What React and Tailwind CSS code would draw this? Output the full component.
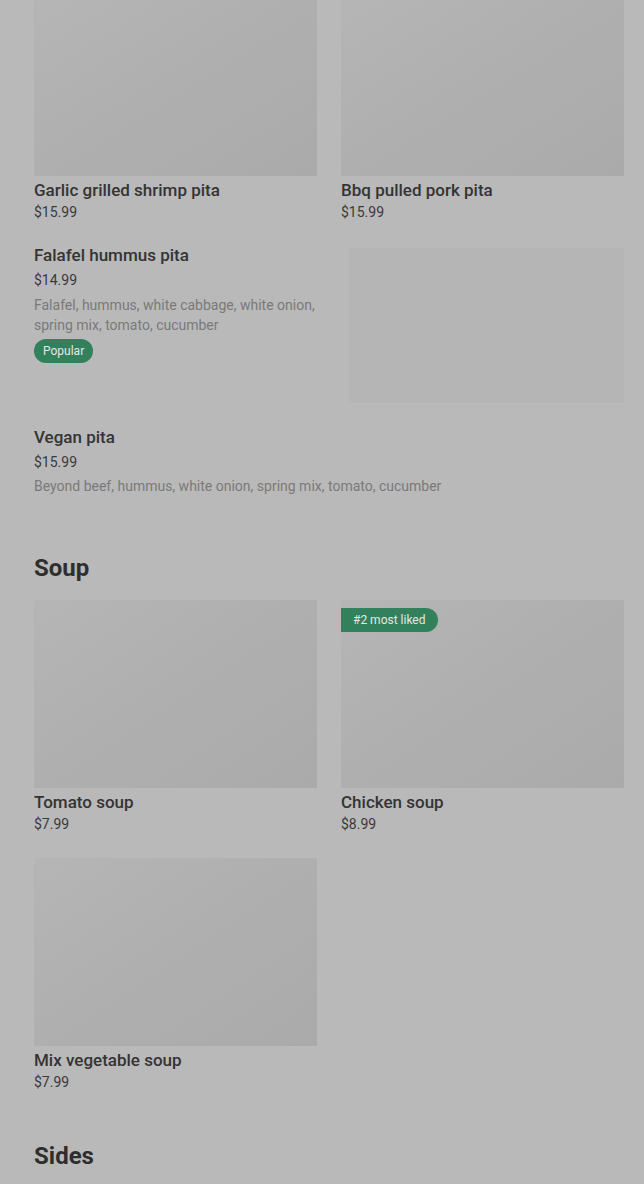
import React from "react";

const Photo = ({ className = "" }) => (
  <div
    className={`bg-gradient-to-br from-[#b5b5b5] via-[#afafaf] to-[#aaaaaa] ${className}`}
  />
);

const GridItem = ({ name, price, tag }) => (
  <div className="flex flex-col">
    <div className="relative">
      <Photo className="h-[188px] w-full" />
      {tag && (
        <span className="absolute left-0 top-2 rounded-r-full bg-[#33805d] pl-3 pr-3 py-1 text-xs leading-4 text-[#e6e6e6]">
          {tag}
        </span>
      )}
    </div>
    <p className="mt-[2px] text-[17px] leading-6 font-medium text-[#343434]">{name}</p>
    <p className="text-sm leading-5 text-[#3a3a3a]">{price}</p>
  </div>
);

export default function App() {
  return (
    <div
      className="min-h-screen bg-[#b9b9b9] pl-[34px] pr-[20px] pb-10"
      style={{ fontFamily: "Roboto, 'Liberation Sans', sans-serif" }}
    >
      <div className="grid grid-cols-2 gap-6">
        <div className="flex flex-col">
          <Photo className="h-[176px] w-full" />
          <p className="mt-[2px] text-[17px] leading-6 font-medium text-[#343434]">
            Garlic grilled shrimp pita
          </p>
          <p className="text-sm leading-5 text-[#3a3a3a]">$15.99</p>
        </div>
        <div className="flex flex-col">
          <Photo className="h-[176px] w-full" />
          <p className="mt-[2px] text-[17px] leading-6 font-medium text-[#343434]">
            Bbq pulled pork pita
          </p>
          <p className="text-sm leading-5 text-[#3a3a3a]">$15.99</p>
        </div>
      </div>

      <div className="mt-[21px] flex gap-6">
        <div className="flex-1">
          <p className="text-[17px] leading-6 font-medium text-[#343434]">
            Falafel hummus pita
          </p>
          <p className="mt-[3px] text-sm leading-5 text-[#3a3a3a]">$14.99</p>
          <p className="mt-[5px] text-sm leading-5 text-[#7a7a7a]">
            Falafel, hummus, white cabbage, white onion, spring mix, tomato, cucumber
          </p>
          <span className="mt-[4px] inline-block rounded-full bg-[#33805d] px-[9px] py-1 text-xs leading-4 text-[#e6e6e6]">
            Popular
          </span>
        </div>
        <div className="mt-[5px] h-[155px] w-[275px] shrink-0 bg-[#b5b5b5]" />
      </div>

      <div className="mt-[22px]">
        <p className="text-[17px] leading-6 font-medium text-[#343434]">Vegan pita</p>
        <p className="mt-[3px] text-sm leading-5 text-[#3a3a3a]">$15.99</p>
        <p className="mt-1 text-sm leading-5 text-[#7a7a7a]">
          Beyond beef, hummus, white onion, spring mix, tomato, cucumber
        </p>
      </div>

      <h2 className="mt-[56px] text-2xl leading-8 font-bold text-[#2e2e2e]">Soup</h2>
      <div className="mt-[16px] grid grid-cols-2 gap-x-6 gap-y-6">
        <GridItem name="Tomato soup" price="$7.99" />
        <GridItem name="Chicken soup" price="$8.99" tag="#2 most liked" />
        <GridItem name="Mix vegetable soup" price="$7.99" />
      </div>

      <h2 className="mt-[48px] text-2xl leading-8 font-bold text-[#2e2e2e]">Sides</h2>
    </div>
  );
}
